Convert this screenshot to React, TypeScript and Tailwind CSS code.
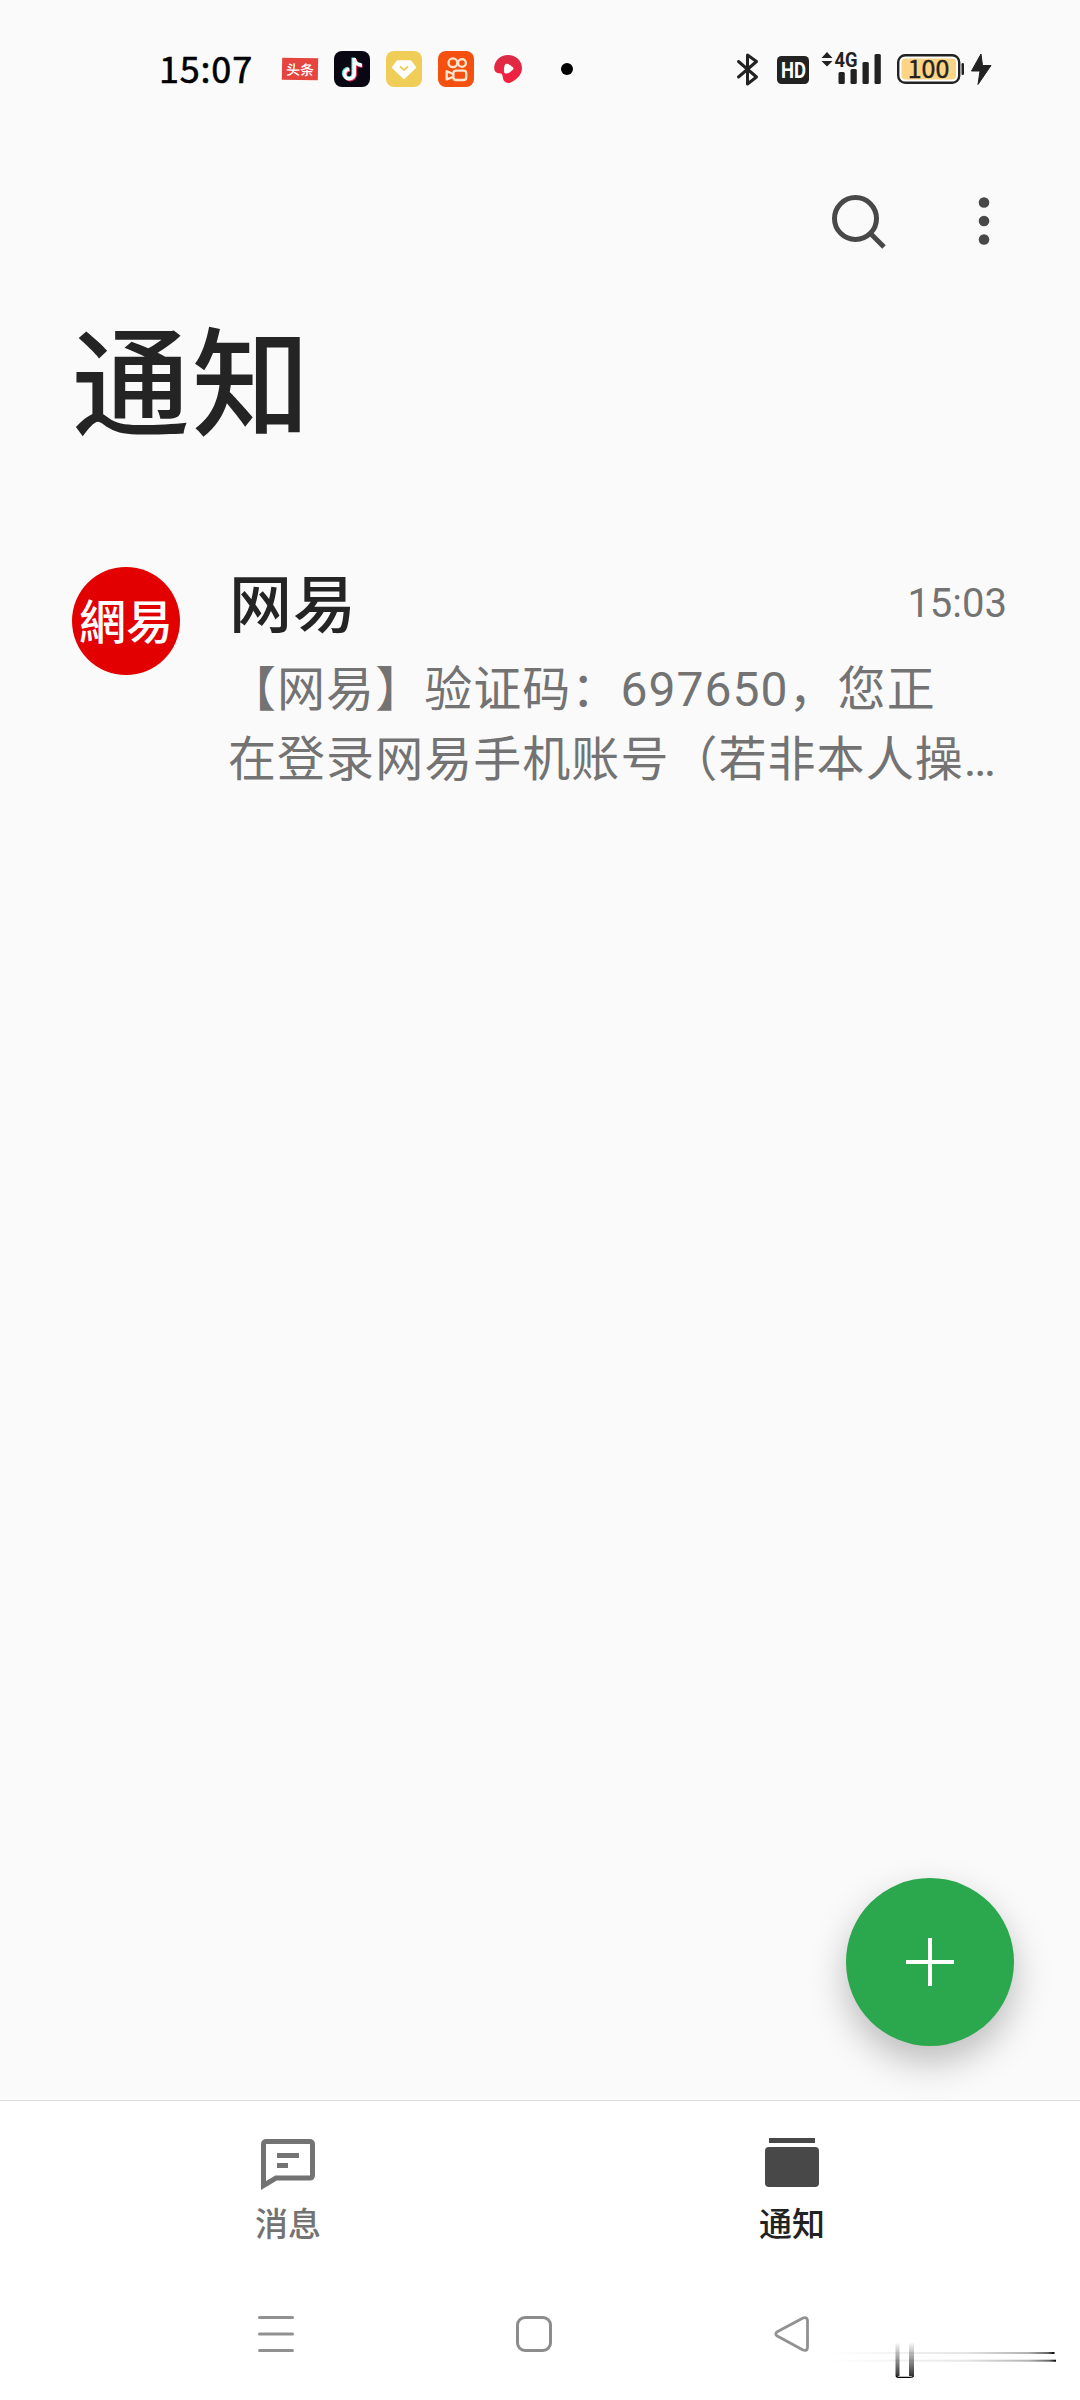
import type { ReactNode } from 'react';

function StatusBar() {
  return (
    <header className="flex h-[138px] items-center justify-between pr-[87px] pl-[159px]">
      <div className="flex items-center">
        <span className="mt-[-4px] w-[123px] font-['Noto_Sans_CJK_SC',sans-serif] text-[36px] leading-none tracking-[0.8px] text-black [-webkit-text-stroke:0.6px_#000]">
          15:07
        </span>
        {/* notification app icons */}
        <div className="flex items-center gap-4">
          <span className="flex h-[22px] w-9 rotate-1 items-center justify-center bg-[#e5443f] font-['Noto_Sans_CJK_SC',sans-serif] text-[14px] leading-none font-medium text-white">
            头条
          </span>
          <svg className="size-9" viewBox="0 0 36 36" fill="none">
            <rect width="36" height="36" rx="8" fill="#0a0714" />
            <g strokeWidth="3.6">
              <path d="M19.2 6.5V22.5A4.8 4.8 0 1 1 14.2 17.5M19.2 7.5C20 11.5 23 13.5 27 13.7" stroke="#45e3e0" />
              <path d="M21.2 8V24A4.8 4.8 0 1 1 16.2 19M21.2 9C22 13 25 15 28.5 15.2" stroke="#ee2a5a" />
              <path d="M20.2 7V23.2A4.8 4.8 0 1 1 15.2 18.2M20.2 8C21 12 24 14 28 14.2" stroke="#fff" />
            </g>
          </svg>
          <svg className="size-9" viewBox="0 0 36 36" fill="none">
            <rect width="36" height="36" rx="8" fill="#efcd57" />
            <path d="M11.5 10H24.5L29.5 16.5L18 27.5L6.5 16.5Z" fill="#fff" stroke="#fff" strokeWidth="1.5" strokeLinejoin="round" />
            <path d="M14 15.5L18 19L22 15.5" stroke="#efcd57" strokeWidth="1.8" />
          </svg>
          <svg className="size-9" viewBox="0 0 36 36" fill="none">
            <rect width="36" height="36" rx="8" fill="#f4500f" />
            <g stroke="#ffe6cf" strokeWidth="2.3">
              <circle cx="14.9" cy="11.8" r="4.4" />
              <circle cx="24" cy="12" r="3.9" />
              <rect x="15.4" y="19.6" width="12.8" height="9.4" rx="2.6" />
              <path d="M15 23L8.7 20.3V28.4L15 26" strokeLinejoin="round" />
            </g>
          </svg>
          <svg className="ml-1 h-[30px] w-7" viewBox="0 0 28 30">
            <defs>
              <linearGradient id="video-red" x1="0" y1="0" x2="0" y2="1">
                <stop offset="0" stopColor="#d92c48" />
                <stop offset="1" stopColor="#f5203c" />
              </linearGradient>
            </defs>
            <path d="M14 1C22 1 28 6.5 28 14.5C28 21 22 26 16.5 28.5C14 29.8 11 28.5 9.5 26C8.5 24 9 21 7.5 19.8C6.500 19 4.500 20 2.500 18.500C.8 17.500 0 16 .2 13C1.200 6 6 1 14 1Z" fill="url(#video-red)" />
            <path d="M11.500 10Q14 9 18 12.500Q21 14.500 18 16.500Q14.500 20 11.500 19.500Q9.500 19 10 15Q10.200 11 11.500 10Z" fill="#fff" />
          </svg>
        </div>
        <span className="ml-[39px] size-3 rounded-full bg-black" />
      </div>

      <svg className="h-9 w-[256px] overflow-visible" viewBox="0 0 256 36" fill="#222">
        {/* bluetooth */}
        <path d="M1.500 10.500L19.500 26L10.500 33V4L19.500 10.500L1.500 26" fill="none" stroke="#222" strokeWidth="3" strokeLinejoin="round" strokeLinecap="round" />
        <rect x="40" y="5" width="32" height="28" rx="4.500" />
        <text x="44" y="26.500" textLength="25" lengthAdjust="spacingAndGlyphs" fill="#fff" className="font-['Roboto',sans-serif] text-[22px] font-bold">
          HD
        </text>
        {/* signal */}
        <path d="M90 1L95.500 7H84.500ZM90 15.500L95.500 10H84.500Z" />
        <text x="97.500" y="15.500" textLength="23" lengthAdjust="spacingAndGlyphs" className="font-['Roboto',sans-serif] text-[20px] font-bold">
          4G
        </text>
        <rect x="101.500" y="21" width="6.300" height="12" rx="1.500" />
        <rect x="113.500" y="18" width="6.300" height="15" rx="1.500" />
        <rect x="125.500" y="11" width="6.300" height="22" rx="1.500" />
        <rect x="137.500" y="3" width="6.300" height="30" rx="1.500" />
        {/* battery */}
        <rect x="161.200" y="4.200" width="61" height="27.600" rx="7" fill="#fff" stroke="#222" strokeWidth="2.400" />
        <rect x="164.500" y="7.500" width="54.500" height="21" rx="4" fill="#fbd485" />
        <rect x="224.500" y="12" width="2.500" height="12" rx="1.200" />
        <text x="191.500" y="27.200" textAnchor="middle" stroke="#222" strokeWidth=".4" className="font-['Noto_Sans_CJK_SC',sans-serif] text-[25px]">
          100
        </text>
        <path d="M244 3L234.500 20H243L241 33.500L254 14.500H245.500Z" stroke="#222" strokeLinejoin="round" />
      </svg>
    </header>
  );
}

interface TabProps {
  label: string;
  active?: boolean;
  children: ReactNode;
}

function Tab({ label, active, children }: TabProps) {
  return (
    <button className={`flex w-[504px] flex-col items-center pt-[34px] ${active ? 'text-[#222]' : 'text-[#737373]'}`}>
      {children}
      <span className="mt-[13px] text-[33px] leading-10 font-medium">{label}</span>
    </button>
  );
}

export default function App() {
  return (
    <div className="relative flex h-[2400px] w-[1080px] flex-col overflow-hidden bg-[#fafafa] font-['Roboto','Noto_Sans_CJK_SC',sans-serif]">
      <StatusBar />

      <div className="flex h-[166px] items-center justify-end gap-[91px] pr-[90px]">
        <svg className="size-14" viewBox="0 0 56 56" fill="none" stroke="#484848" strokeWidth="5">
          <circle cx="24.500" cy="25.500" r="21" />
          <path d="M39 40L53 54" />
        </svg>
        <svg className="h-12 w-3" viewBox="0 0 12 48" fill="#484848">
          <circle cx="6" cy="5.500" r="5.300" />
          <circle cx="6" cy="24" r="5.300" />
          <circle cx="6" cy="42.500" r="5.300" />
        </svg>
      </div>

      <h1 className="h-[246px] pt-[3px] pl-[72px] text-[118px] leading-[160px] font-medium tracking-[2px] text-[#242424]">
        通知
      </h1>

      <main className="flex flex-1 items-start pl-[72px]">
        <svg className="mt-[17px] size-[108px]" viewBox="0 0 108 108">
          <circle cx="54" cy="54" r="54" fill="#e30000" />
          <text x="54" y="72" textAnchor="middle" fill="#fff" className="font-['Noto_Sans_CJK_TC',sans-serif] text-[47px] font-medium">
            網易
          </text>
        </svg>
        <div className="ml-[48px] flex w-[779px] flex-col">
          <div className="flex items-center justify-between">
            <h2 className="pt-[4px] pl-px text-[63px] leading-[104px] font-medium tracking-[1px] text-[#242424]">网易</h2>
            <time className="text-[40px] text-[#737373]">15:03</time>
          </div>
          <p className="mt-[-3px] text-[48px] leading-[70px] tracking-[1.05px] whitespace-nowrap text-[#737373]">
            【网易】验证码：697650，您正
            <br />
            在登录网易手机账号（若非本人操…
          </p>
        </div>
      </main>

      <button className="absolute top-[1878px] left-[846px] flex size-[168px] items-center justify-center rounded-full bg-[#2ba84d] shadow-[0_16px_36px_rgba(0,0,0,0.25)]">
        <svg className="size-12" viewBox="0 0 48 48" stroke="#fff" strokeWidth="4">
          <path d="M24 0V48M0 24H48" />
        </svg>
      </button>

      <nav className="flex h-[180px] justify-center border-t border-[#dedede] bg-white pt-px">
        <Tab label="消息">
          <svg className="h-[56px] w-[54px]" viewBox="0 0 54 56" fill="none" stroke="currentColor" strokeWidth="5">
            <path d="M2.500 49.500V8.500Q2.500 5.500 5.500 5.500H48.500Q51.500 5.500 51.500 8.500V39Q51.500 42 48.500 42H15Z" />
            <path d="M16 19.500H38M16 29.500H27" />
          </svg>
        </Tab>
        <Tab label="通知" active>
          <svg className="h-[56px] w-[54px]" viewBox="0 0 54 56" fill="#484848">
            <rect x="4" y="2" width="46" height="5" />
            <rect y="11" width="54" height="40" rx="4" />
          </svg>
        </Tab>
      </nav>

      {/* system navigation */}
      <footer className="relative h-[120px] bg-white">
        <div className="flex items-center gap-[222px] pt-[34px] pl-[258px]">
          <svg className="h-[40px] w-9" viewBox="0 0 36 40" stroke="#919191" strokeWidth="3" strokeLinecap="round">
            <path d="M1.500 3.500H34.500M1.500 20H34.500M1.500 36.500H34.500" />
          </svg>
          <svg className="h-[40px] w-9" viewBox="0 0 36 40" fill="none" stroke="#8c8c8c" strokeWidth="3">
            <rect x="1.500" y="3.500" width="33" height="33" rx="7.500" />
          </svg>
          <svg className="h-[40px] w-9" viewBox="0 0 36 40" fill="none" stroke="#919191" strokeWidth="2.800" strokeLinejoin="round">
            <path d="M2.800 18Q.8 20 2.800 21.800L29 36Q33.500 37.500 33.500 33V7Q33.500 2.500 29 4Z" />
          </svg>
        </div>
        <svg className="absolute top-[60px] left-[820px] h-[42px] w-[240px]" viewBox="0 0 240 42">
          <defs>
            <linearGradient id="streak" x1="0" x2="1" y1="0" y2="0">
              <stop offset="0" stopColor="#000" stopOpacity="0" />
              <stop offset=".6" stopColor="#000" stopOpacity=".1" />
              <stop offset=".88" stopColor="#000" stopOpacity=".3" />
              <stop offset=".97" stopColor="#000" stopOpacity=".6" />
              <stop offset="1" stopColor="#000" />
            </linearGradient>
            <linearGradient id="fade" x1="0" x2="0" y1="0" y2="1">
              <stop offset="0" stopColor="#000" stopOpacity="0" />
              <stop offset="1" stopColor="#000" stopOpacity=".8" />
            </linearGradient>
          </defs>
          <rect x="10" y="12" width="224.500" height="2" fill="url(#streak)" />
          <rect x="10" y="19.700" width="226" height="2" fill="url(#streak)" />
          <rect x="75.500" y="2" width="4" height="34" fill="url(#fade)" />
          <rect x="89" y="2" width="5" height="34" fill="url(#fade)" />
          <path d="M76 36Q77 37.300 79 37.300H90Q93 37.300 93.500 36" fill="none" stroke="#000" strokeWidth="1.300" />
        </svg>
      </footer>
    </div>
  );
}
